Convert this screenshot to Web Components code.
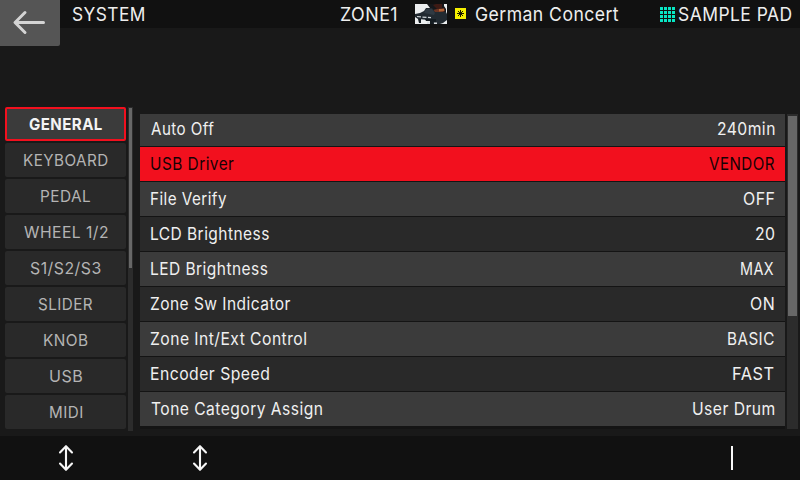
<!DOCTYPE html>
<html lang="en"><head><meta charset="utf-8"><title>System</title>
<style>html,body{margin:0;background:#191919;overflow:hidden}body{width:800px;height:480px}</style></head>
<body><system-screen></system-screen>
<script>
const def=(n,c)=>customElements.define(n,c);
const root=(el,html)=>{const r=el.attachShadow({mode:'open'});r.innerHTML=html;return r;};
const ctx=document.createElement('canvas').getContext('2d');
// One line of text whose visible ink spans the width given in "w".
def('panel-text',class extends HTMLElement{
 connectedCallback(){
  if(this.shadowRoot)return;
  const s=+this.getAttribute('size')||17,w=+this.getAttribute('w'),b=this.getAttribute('weight')||400,t=this.getAttribute('text'),gap=0.5;
  ctx.font=`${b} ${s}px Inter, sans-serif`;
  const m=ctx.measureText(t),ink=m.actualBoundingBoxLeft+m.actualBoundingBoxRight+gap*(t.length-1),k=w/ink;
  root(this,`<style>:host{display:block;width:${w}px;height:${s+7}px;flex:none}
  span{display:inline-block;white-space:pre;font:${b} ${s}px/${s+7}px Inter,sans-serif;letter-spacing:${gap}px;transform-origin:0 50%;transform:scaleX(${k});margin-left:${m.actualBoundingBoxLeft*k}px}</style><span></span>`)
  .querySelector('span').textContent=t;
 }});
def('side-tab',class extends HTMLElement{connectedCallback(){
 const on=this.hasAttribute('on');
 root(this,`<style>:host{display:flex;box-sizing:border-box;height:34px;align-items:center;justify-content:center;border-radius:2px;padding-top:${on?1:1.5}px;
 background:${on?'#3b3b3b':'#292929'};color:${on?'#f4f4f4':'#b4b4b4'};border:2px solid ${on?'#f2101e':'#292929'}}</style><slot></slot>`);
}});
def('setting-row',class extends HTMLElement{connectedCallback(){
 const v=this.getAttribute('tone');
 root(this,`<style>:host{display:flex;height:34px;flex:none;align-items:center;justify-content:space-between;padding:0 10.8px 0 10.6px;
 background:${v==='sel'?'#f2101e':v==='light'?'#3b3b3b':'#292929'};color:${v==='sel'?'#160204':'#f0f0f0'}}</style><slot></slot>`);
}});
def('scroll-bar',class extends HTMLElement{connectedCallback(){
 root(this,`<style>:host{display:block;box-sizing:border-box;background:#2c2c2c;padding:var(--top) 1px 0}
 div{height:var(--thumb);background:#676767}</style><div></div>`);
}});
def('back-button',class extends HTMLElement{connectedCallback(){
 root(this,`<style>:host{display:block;width:60px;height:46px;background:#555;border-radius:0 0 2px 0}svg{display:block}</style>
 <svg width="60" height="46" fill="none" stroke="#d4d4d4" stroke-width="3" stroke-linecap="round" stroke-linejoin="round"><path d="M43.5 22.5H15.5M25 12.5L15 22.5L25 32.5"/></svg>`);
}});
def('tone-picture',class extends HTMLElement{connectedCallback(){
 root(this,`<style>:host,svg{display:block}</style><svg width="32" height="20"><rect width="32" height="20" fill="#eceeef"/>
 <path d="M12 0H29L29 2L31 5V9H13L15 4Z" fill="#15171a"/><path d="M18 1L21 0H27L27 4L22 5Z" fill="#3d1a14"/><path d="M18 6L22 5L29 4L30 7L26 9L19 8Z" fill="#6d3422"/><path d="M24 5H29V7L24 7.5Z" fill="#b06436"/>
 <path d="M11 4L17 4L20 8L31 8L32 10V16L28 19L25 20H17L14 16L3 15L0 13V10L5 9L9 7Z" fill="#222a31"/><path d="M11 5L17 5L20 9L19 11L9 9Z" fill="#303a43"/>
 <path d="M2 12.5L7 13L16 13.6" stroke="#cfd5d8" fill="none" stroke-width="1.2" stroke-dasharray="4 1.5"/><path d="M3 15H6V19H4ZM10 15H21V18H18V20H15V17H11Z" fill="#141b20"/><path d="M12 17.5H15V20H12ZM19 18.5H22V20H19Z" fill="#d9dddf"/></svg>`);
}});
def('tone-badge',class extends HTMLElement{connectedCallback(){
 root(this,`<style>:host,svg{display:block}</style><svg width="11" height="11"><rect width="11" height="11" fill="#f5f000"/><path d="M5.5 2V9M2 5.5H9M3 3L8 8M8 3L3 8" stroke="#171700" stroke-width="1"/></svg>`);
}});
def('pad-grid',class extends HTMLElement{connectedCallback(){
 root(this,`<style>:host{display:grid;width:15px;height:15px;grid-template:repeat(4,3px)/repeat(4,3px);gap:1px}i{background:#08e6c4}</style>${'<i></i>'.repeat(16)}`);
}});
def('updown-icon',class extends HTMLElement{connectedCallback(){
 root(this,`<style>:host,svg{display:block}</style><svg width="16" height="28" fill="none" stroke="#f6f6f6" stroke-width="2.1" stroke-linecap="round" stroke-linejoin="round"><path d="M8 2.5V25.5M2 8.5L8 2.2L14 8.5M2 19.5L8 25.8L14 19.5"/></svg>`);
}});
const tabs=[['GENERAL',73],['KEYBOARD',83.5],['PEDAL',49.5],['WHEEL 1/2',83.5],['S1/S2/S3',71],['SLIDER',55],['KNOB',43.5],['USB',32],['MIDI',32]];
const rows=[['Auto Off',63.5,'240min',56.5],['USB Driver',83.5,'VENDOR',65.5],['File Verify',76,'OFF',30],['LCD Brightness',118.5,'20',18.5],['LED Brightness',117,'MAX',33],['Zone Sw Indicator',140,'ON',23],['Zone Int/Ext Control',155,'BASIC',46],['Encoder Speed',118.5,'FAST',41],['Tone Category Assign',171,'User Drum',81.5]];
def('system-screen',class extends HTMLElement{connectedCallback(){
 root(this,`<style>
 :host{display:grid;width:800px;height:480px;grid-template-rows:46px 390px 44px;background:#191919;color:#eee}
 header{display:flex;background:linear-gradient(#111 28px,#191919 28px)}
 header>.bar{display:flex;height:28px;align-items:center;flex:1;padding:1px 8.5px 0 13px;box-sizing:border-box}
 .zone{margin-left:196px}tone-picture{margin:-1px 0 0 18.5px}tone-badge{margin:-2px 0 0 8px}.tone{margin-left:10px}pad-grid{margin:0 4px 0 auto}
 main{display:grid;grid-template-columns:121px 5px 650px 11px;column-gap:2px;padding-left:5px}
 nav{padding-top:61px;display:flex;flex-direction:column;gap:2px}
 .sb1{margin:61px 0 5px;--top:1px;--thumb:160px}
 section{margin:68px 0 7px 5px;width:645px;height:315px;overflow:hidden;display:flex;flex-direction:column;gap:1px;background:#141414}
 section>:first-child{margin-top:-2px}
 .sb2{margin:68px 0 7px;--top:2px;--thumb:200px}
 footer{background:#111;display:flex;align-items:center}
 .u1{margin-left:58px}.u2{margin-left:118px}.line{width:2px;height:24px;background:#f8f8f8;margin-left:523px}
 </style>
 <header><back-button></back-button><div class="bar"><panel-text size="19" w="71.5" text="SYSTEM"></panel-text>
 <panel-text class="zone" size="19" w="56" text="ZONE1"></panel-text><tone-picture></tone-picture><tone-badge></tone-badge>
 <panel-text class="tone" size="19" w="142.5" text="German Concert"></panel-text><pad-grid></pad-grid><panel-text size="19" w="112.5" text="SAMPLE PAD"></panel-text></div></header>
 <main><nav>${tabs.map(([t,w],i)=>`<side-tab ${i?'':'on'}><panel-text size="16.5" weight="${i?400:700}" w="${w}" text="${t}"></panel-text></side-tab>`).join('')}</nav>
 <scroll-bar class="sb1"></scroll-bar>
 <section>${rows.map(([a,aw,b,bw],i)=>`<setting-row tone="${i==1?'sel':i%2?'dark':'light'}"><panel-text w="${aw}" text="${a}"></panel-text><panel-text w="${bw}" text="${b}"></panel-text></setting-row>`).join('')}</section>
 <scroll-bar class="sb2"></scroll-bar></main>
 <footer><updown-icon class="u1"></updown-icon><updown-icon class="u2"></updown-icon><div class="line"></div></footer>`);
}});
</script></body></html>
